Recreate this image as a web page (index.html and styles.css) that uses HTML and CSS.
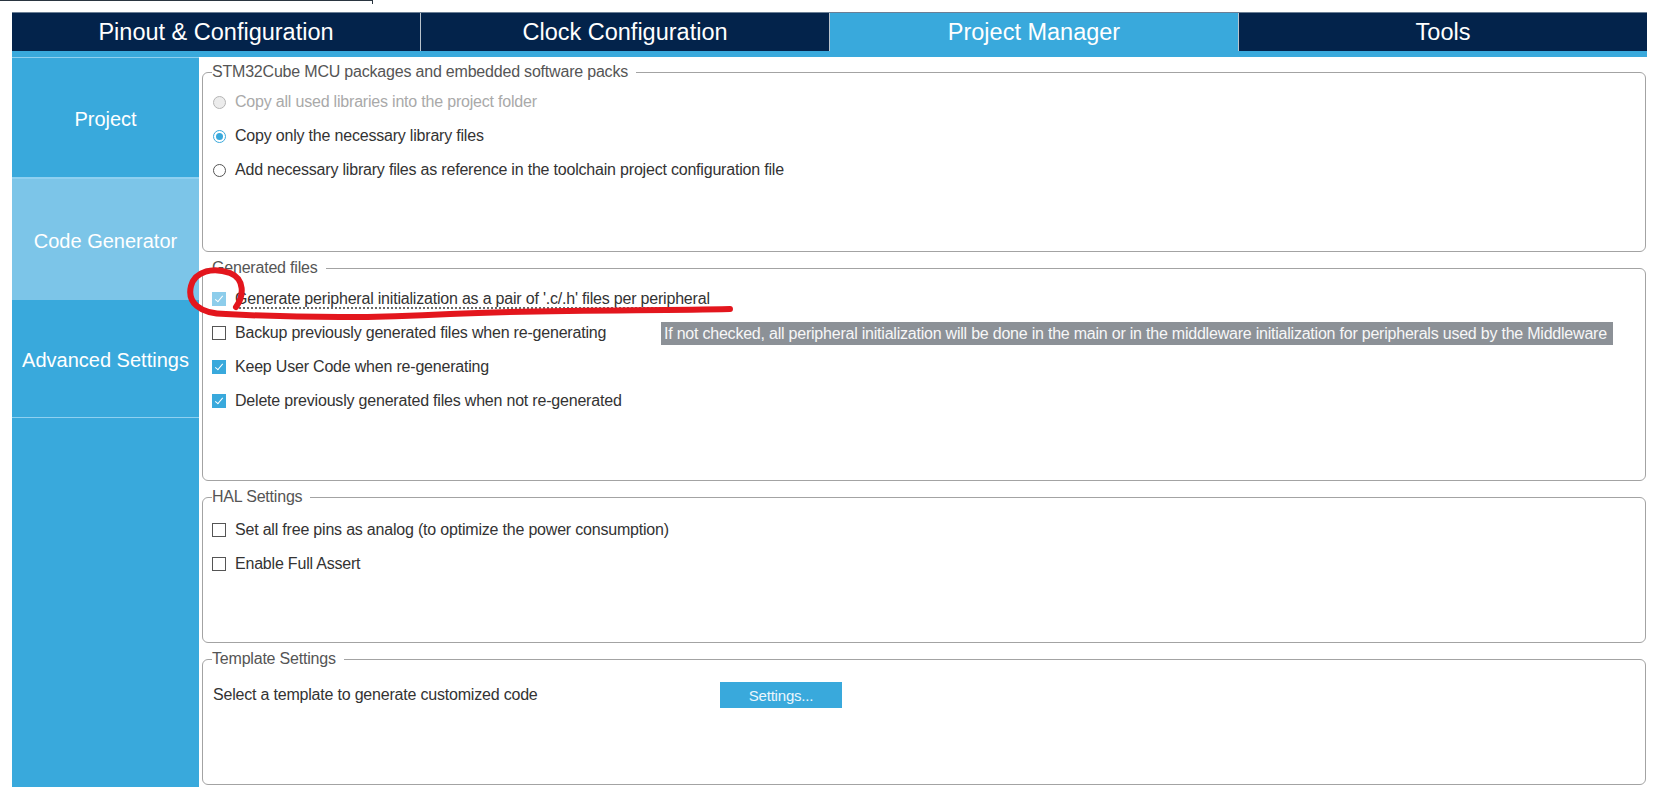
FILE: index.html
```html
<!DOCTYPE html>
<html>
<head>
<meta charset="utf-8">
<link rel="stylesheet" href="styles.css">
</head>
<body>
<div class="topline"><div class="topline-seg"></div></div>
<nav class="tabs">
  <div class="tab">Pinout &amp; Configuration</div>
  <div class="tab">Clock Configuration</div>
  <div class="tab active">Project Manager</div>
  <div class="tab">Tools</div>
</nav>
<div class="strip"></div>
<div class="main">
  <aside class="sidebar">
    <div class="side-item project">Project</div>
    <div class="side-item codegen">Code Generator</div>
    <div class="side-item advanced">Advanced Settings</div>
  </aside>
  <section class="content">
    <fieldset class="panel p1">
      <legend>STM32Cube MCU packages and embedded software packs</legend>
      <div class="row disabled"><span class="radio radio-disabled"></span><span>Copy all used libraries into the project folder</span></div>
      <div class="row"><span class="radio radio-on"></span><span>Copy only the necessary library files</span></div>
      <div class="row"><span class="radio"></span><span>Add necessary library files as reference in the toolchain project configuration file</span></div>
    </fieldset>
    <fieldset class="panel p2">
      <legend>Generated files</legend>
      <div class="row"><span class="check check-hover"></span><span class="dotted">Generate peripheral initialization as a pair of '.c/.h' files per peripheral</span></div>
      <div class="row"><span class="check check-off"></span><span>Backup previously generated files when re-generating</span></div>
      <div class="row"><span class="check"></span><span>Keep User Code when re-generating</span></div>
      <div class="row"><span class="check"></span><span>Delete previously generated files when not re-generated</span></div>
    </fieldset>
    <fieldset class="panel p3">
      <legend>HAL Settings</legend>
      <div class="row"><span class="check check-off"></span><span>Set all free pins as analog (to optimize the power consumption)</span></div>
      <div class="row"><span class="check check-off"></span><span>Enable Full Assert</span></div>
    </fieldset>
    <fieldset class="panel p4">
      <legend>Template Settings</legend>
      <div class="row template-row"><span class="template-label">Select a template to generate customized code</span><button class="btn">Settings...</button></div>
    </fieldset>
  </section>
</div>
<div class="tooltip">If not checked, all peripheral initialization will be done in the main or in the middleware initialization for peripherals used by the Middleware</div>
<svg class="annot" width="1653" height="793" viewBox="0 0 1653 793">
  <path d="M236 307 C244 296, 245 279, 230 273 C213 267, 195 271, 191 286 C187 302, 199 314, 226 314 C300 318, 380 318, 450 314 C560 309, 650 311, 730 309" fill="none" stroke="#e3161d" stroke-width="6" stroke-linecap="round" stroke-linejoin="round"/>
</svg>
</body>
</html>
```
FILE: styles.css
```css
* { box-sizing: border-box; }
html, body { margin: 0; padding: 0; }
body {
  width: 1653px;
  height: 793px;
  overflow: hidden;
  position: relative;
  background: #ffffff;
  font-family: "Liberation Sans", Arial, sans-serif;
  color: #333333;
}
.topline { height: 12px; }
.topline-seg {
  width: 373px;
  height: 4px;
  border-top: 1px solid #2a3540;
  border-right: 1px solid #2a3540;
}
.tabs {
  display: flex;
  height: 39px;
  margin: 0 6px 0 12px;
  background: #03234b;
  border-top: 1px solid #6b7f95;
}
.tab {
  flex: 1;
  display: flex;
  align-items: center;
  justify-content: center;
  color: #ffffff;
  font-size: 23.5px;
  border-left: 1px solid #b9c3cc;
}
.tab:first-child { border-left: none; }
.tab.active { background: #39a9dc; }
.strip {
  height: 6px;
  margin: 0 6px 0 12px;
  background: #39a9dc;
}
.main {
  display: flex;
  gap: 3px;
  margin: 0 7px 0 12px;
  height: 730px;
}
.sidebar {
  width: 187px;
  flex: none;
  background: #39a9dc;
  border-top: 1px solid #8fd0f0;
  display: flex;
  flex-direction: column;
}
.side-item {
  display: flex;
  align-items: center;
  justify-content: center;
  color: #ffffff;
  font-size: 20px;
  padding-top: 4px;
}
.side-item.project { height: 121px; border-bottom: 2px solid #8fd0f0; }
.side-item.codegen { height: 121px; background: #7cc5e8; }
.side-item.advanced { height: 118px; border-bottom: 1px solid #8fd0f0; }
.content {
  flex: 1;
  display: flex;
  flex-direction: column;
  gap: 7px;
  padding-top: 6px;
}
.panel {
  margin: 0;
  padding: 4px 10px 0 10px;
  border: 1px solid #a3a3a3;
  border-radius: 6px;
  min-width: 0;
}
.panel legend {
  font-size: 16px;
  letter-spacing: -0.2px;
  line-height: 18px;
  color: #555555;
  padding: 0 8px 0 0;
  margin-left: -1px;
}
.p1 { height: 189px; }
.p2 { height: 222px; padding-top: 5px; }
.p3 { height: 155px; padding-top: 7px; }
.p4 { height: 135px; padding-top: 9px; }
.row {
  display: flex;
  align-items: center;
  gap: 9px;
  height: 34px;
  font-size: 16px;
  letter-spacing: -0.2px;
  color: #333333;
}
.row.disabled { color: #a9a9a9; }
.radio {
  width: 13px;
  height: 13px;
  border-radius: 50%;
  border: 1px solid #555555;
  background: #ffffff;
  flex: none;
  position: relative;
}
.radio-disabled { border-color: #b5b5b5; background: #ececec; }
.radio-on { border-color: #39a9dc; }
.radio-on::after {
  content: "";
  position: absolute;
  left: 2px;
  top: 2px;
  width: 7px;
  height: 7px;
  border-radius: 50%;
  background: #39a9dc;
}
.check {
  width: 14px;
  height: 14px;
  flex: none;
  background: #39a9dc;
  position: relative;
  margin-left: -1px;
}
.check::after {
  content: "";
  position: absolute;
  left: 5px;
  top: 2px;
  width: 3px;
  height: 7px;
  border: solid #ffffff;
  border-width: 0 1.5px 1.5px 0;
  transform: rotate(40deg);
}
.check-hover { background: #8dcdeb; }
.check-off { background: #ffffff; border: 1px solid #555555; }
.check-off::after { display: none; }
.dotted {
  text-decoration: underline dotted #444444;
  text-underline-offset: 4px;
}
.template-row { gap: 0; height: 36px; }
.template-label { width: 507px; flex: none; }
.btn {
  width: 122px;
  height: 26px;
  border: none;
  background: #39a9dc;
  color: #eaf6fc;
  font-family: "Liberation Sans", Arial, sans-serif;
  font-size: 15px;
  letter-spacing: -0.2px;
  padding: 0;
}
.tooltip {
  position: absolute;
  left: 661px;
  top: 322px;
  width: 952px;
  height: 23px;
  background: #8c9197;
  color: #f7f7f7;
  font-size: 16px;
  letter-spacing: -0.22px;
  line-height: 23px;
  padding-left: 3px;
  white-space: nowrap;
}
.annot {
  position: absolute;
  left: 0;
  top: 0;
  pointer-events: none;
}
```
